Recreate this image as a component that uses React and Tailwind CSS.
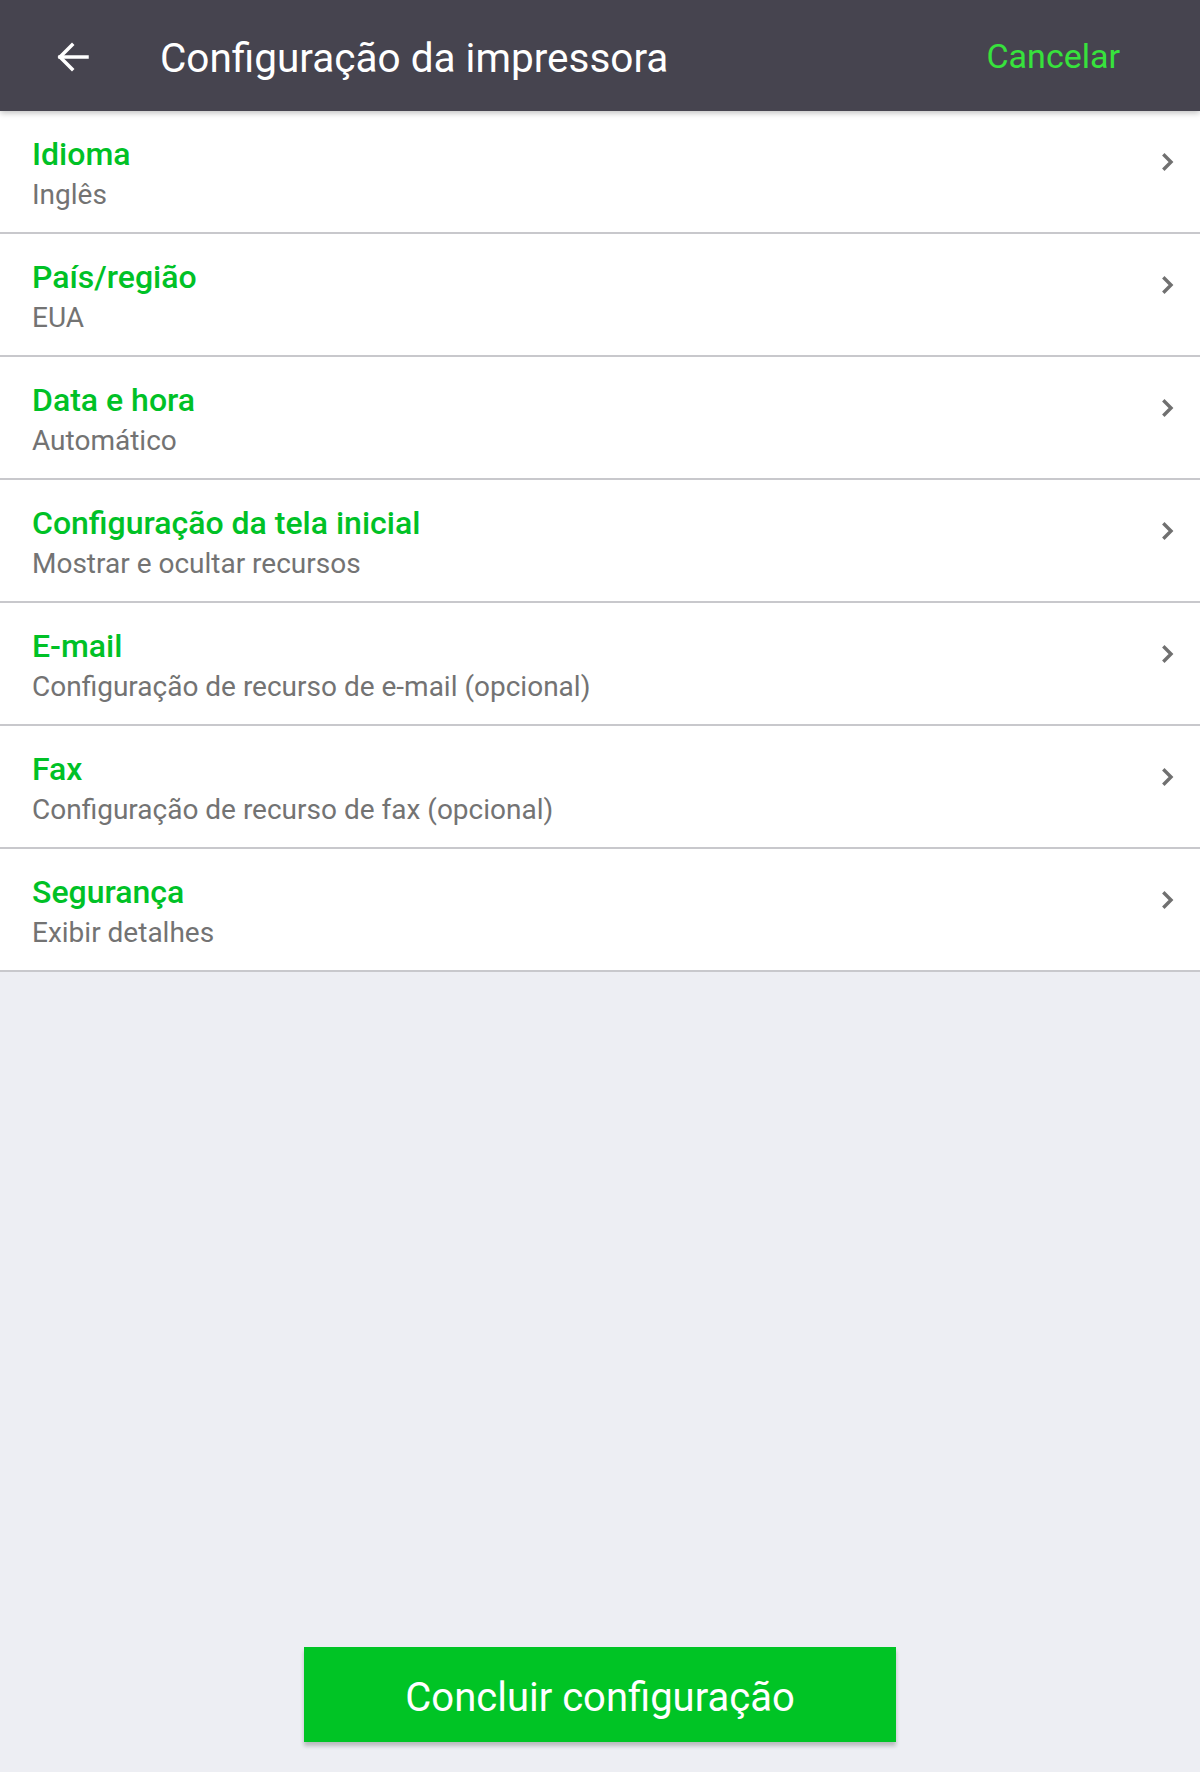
import React from 'react';

const items = [
  { title: 'Idioma', sub: 'Inglês' },
  { title: 'País/região', sub: 'EUA' },
  { title: 'Data e hora', sub: 'Automático' },
  { title: 'Configuração da tela inicial', sub: 'Mostrar e ocultar recursos' },
  { title: 'E-mail', sub: 'Configuração de recurso de e-mail (opcional)' },
  { title: 'Fax', sub: 'Configuração de recurso de fax (opcional)' },
  { title: 'Segurança', sub: 'Exibir detalhes' },
];

function BackArrow() {
  return (
    <svg width="32" height="32" viewBox="0 0 32 32" fill="none" stroke="white" strokeWidth="3.5" strokeLinecap="square">
      <path d="M3 16H30" />
      <path d="M15 4L3 16L15 28" />
    </svg>
  );
}

function Chevron() {
  return (
    <svg width="12" height="18" viewBox="0 0 12 18" fill="none" stroke="#707070" strokeWidth="3.4" strokeLinecap="square">
      <path d="M2.5 2.5L9 9L2.5 15.5" />
    </svg>
  );
}

function SettingRow({ title, sub }) {
  return (
    <div className="flex items-start bg-white border-b-2 border-[#c8c8cc] h-[123px] pl-8 pr-[26px]">
      <div className="flex-1 pt-[25px]">
        <div className="text-[32px] leading-[36px] font-medium text-[#00c126]">{title}</div>
        <div className="mt-[5px] text-[28px] leading-[36px] text-[#737373]">{sub}</div>
      </div>
      <div className="mt-[42px]">
        <Chevron />
      </div>
    </div>
  );
}

export default function App() {
  return (
    <div className="w-[1200px] h-[1772px] flex flex-col bg-[#edeef3] font-['Roboto',_'Noto_Sans',_sans-serif]">
      <header className="relative z-10 flex items-center h-[111px] bg-[#46444f] shadow-[0_2px_6px_rgba(0,0,0,0.25)] pl-[57px] pr-[80px]">
        <div className="mt-[2px]">
          <BackArrow />
        </div>
        <h1 className="ml-[71px] pt-[4px] text-[40.5px] leading-[48px] text-white flex-1">Configuração da impressora</h1>
        <button className="text-[34px] leading-[40px] text-[#37e23c]">Cancelar</button>
      </header>
      <div className="flex flex-col">
        {items.map((it) => (
          <SettingRow key={it.title} title={it.title} sub={it.sub} />
        ))}
      </div>
      <div className="flex-1" />
      <div className="flex justify-center pb-[30px]">
        <button className="w-[592px] h-[95px] pt-[6px] bg-[#00c425] text-white text-[40px] leading-[48px] shadow-[0_4px_4px_rgba(0,0,0,0.22)]">
          Concluir configuração
        </button>
      </div>
    </div>
  );
}
